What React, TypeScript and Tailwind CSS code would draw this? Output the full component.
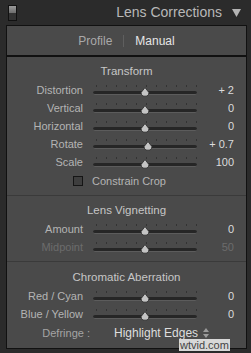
const font = { fontFamily: '"Liberation Sans", Arial, sans-serif' };

interface SliderRowProps {
  label: string;
  value: string;
  pos: number;
  dim?: boolean;
}

const Thumb = () => (
  <svg width="10" height="10" viewBox="0 0 10 10" className="absolute top-[0px]">
    <path d="M5 0.6 L8.8 5.4 Q9.2 9.2 5 9.2 Q0.8 9.2 1.2 5.4 Z" fill="#c4c4c4" stroke="#2a2a2a" strokeWidth="0.8" />
  </svg>
);

const Track = ({ pos }: { pos: number }) => {
  const ticks = [0, 10, 20, 30, 40, 50, 60, 70, 80, 90, 100];
  return (
    <div className="relative w-[104px] h-[18px]">
      {ticks.map((t) => (
        <div key={t} className="absolute top-[4px] w-px h-[2px] bg-[#333]" style={{ left: t + 3 }} />
      ))}
      <div className="absolute top-[10px] left-0 w-[104px] h-[4px] rounded-full bg-[#262626] border-b border-[#5c5c5c]" />
      <div className="absolute top-[6px]" style={{ left: pos - 5 }}>
        <Thumb />
      </div>
    </div>
  );
};

const SliderRow = ({ label, value, pos, dim }: SliderRowProps) => (
  <div className="flex items-center h-[18px]">
    <div className={`w-[76px] text-right text-[11px] ${dim ? 'text-[#6c6c6c]' : 'text-[#b4b4b4]'}`}>{label}</div>
    <div className="ml-[10px]">
      <Track pos={pos} />
    </div>
    <div className={`w-[37px] text-right text-[11px] ${dim ? 'text-[#6c6c6c]' : 'text-[#dcdcdc]'}`}>{value}</div>
  </div>
);

const Title = ({ children }: { children: string }) => (
  <div className="h-[18px] flex items-center justify-center text-[11.5px] text-[#c6c6c6]">{children}</div>
);

const App = () => {
  return (
    <div className="w-[251px] h-[353px] bg-[#2b2b2b] relative overflow-hidden" style={font}>
      {/* Header */}
      <div className="h-[25px] flex items-center pl-[8px] pr-[10px]">
        <div className="w-[9px] h-[16px] border border-[#111] flex flex-col">
          <div className="h-1/2 bg-gradient-to-b from-[#9a9a9a] to-[#6e6e6e]" />
          <div className="h-1/2 bg-[#333]" />
        </div>
        <div className="flex-1 text-right text-[14px] text-[#b8b8b8] pr-[10px]">Lens Corrections</div>
        <svg width="9" height="8" viewBox="0 0 9 8">
          <path d="M0 0 H9 L4.5 8 Z" fill="#b4b4b4" />
        </svg>
      </div>

      <div className="ml-[6px] w-[241px] border border-[#111] bg-[#4a4a4a]">
        {/* Tabs */}
        <div className="h-[31px] flex items-center justify-center text-[12px] border-b-2 border-[#111]">
          <span className="text-[#a9a9a9]">Profile</span>
          <span className="mx-[11px] w-px h-[12px] bg-[#5f5f5f]" />
          <span className="text-[#e6e6e6]">Manual</span>
        </div>

        <div className="pt-[6px] pb-[6px]">
          <Title>Transform</Title>
          <SliderRow label="Distortion" value="+ 2" pos={52} />
          <SliderRow label="Vertical" value="0" pos={52} />
          <SliderRow label="Horizontal" value="0" pos={52} />
          <SliderRow label="Rotate" value="+ 0.7" pos={55} />
          <SliderRow label="Scale" value="100" pos={52} />
          <div className="flex items-center h-[18px] mt-[1px] pl-[66px]">
            <div className="w-[10px] h-[10px] border border-[#151515] bg-[#3e3e3e]" />
            <span className="ml-[9px] text-[11px] text-[#b4b4b4]">Constrain Crop</span>
          </div>

          <div className="mt-[5px] h-px bg-[#3a3a3a]" />

          <div className="mt-[6px]">
            <Title>Lens Vignetting</Title>
          </div>
          <SliderRow label="Amount" value="0" pos={52} />
          <SliderRow label="Midpoint" value="50" pos={52} dim />

          <div className="mt-[5px] h-px bg-[#3a3a3a]" />

          <div className="mt-[7px]">
            <Title>Chromatic Aberration</Title>
          </div>
          <SliderRow label="Red / Cyan" value="0" pos={52} />
          <SliderRow label="Blue / Yellow" value="0" pos={52} />
          <div className="flex items-center h-[18px] mt-[1px]">
            <div className="w-[83px] text-right text-[11px] text-[#a4a4a4]">Defringe :</div>
            <span className="ml-[24px] text-[12px] text-[#dedede]">Highlight Edges</span>
            <svg width="6" height="10" viewBox="0 0 6 10" className="ml-[5px]">
              <path d="M0 4 L3 0 L6 4 Z M0 6 L3 10 L6 6 Z" fill="#9a9a9a" />
            </svg>
          </div>
        </div>
      </div>

      {/* watermark */}
      <div className="absolute left-[179px] top-[339px] px-[1px] bg-[#d8d8d8] text-[11px] leading-[12px] text-[#444]">wtvid.com</div>
    </div>
  );
};

export default App;
